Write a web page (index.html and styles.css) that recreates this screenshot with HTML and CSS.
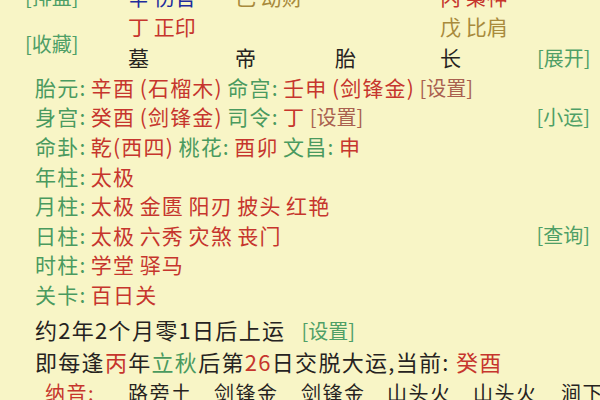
FILE: index.html
```html
<!DOCTYPE html>
<html lang="zh">
<head>
<meta charset="utf-8">
<link rel="stylesheet" href="styles.css">
</head>
<body>
<div class="page">
  <div class="pillars">
    <span class="btn c1 r1">[排盘]</span>
    <span class="c2 r1 blue">辛 伤官</span>
    <span class="c3 r1 olive">己 劫财</span>
    <span class="c5 r1 red">丙 枭神</span>
    <span class="c2 r2 red">丁 正印</span>
    <span class="c5 r2 olive">戊 比肩</span>
    <span class="btn c1 r23 save">[收藏]</span>
    <span class="c2 r3">墓</span>
    <span class="c3 r3">帝</span>
    <span class="c4 r3">胎</span>
    <span class="c5 r3">长</span>
    <span class="btn c6 r3 right">[展开]</span>
  </div>

  <div class="info">
    <div class="row"><span><span class="g">胎元: </span><span class="red">辛酉 (石榴木) </span><span class="g">命宫: </span><span class="red">壬申 (剑锋金) </span><span class="set">[设置]</span></span></div>
    <div class="row"><span><span class="g">身宫: </span><span class="red">癸酉 (剑锋金) </span><span class="g">司令: </span><span class="red">丁 </span><span class="set">[设置]</span></span><span class="btn">[小运]</span></div>
    <div class="row"><span><span class="g">命卦: </span><span class="red">乾(西四) </span><span class="g">桃花: </span><span class="red">酉卯 </span><span class="g">文昌: </span><span class="red">申</span></span></div>
    <div class="row"><span><span class="g">年柱: </span><span class="red">太极</span></span></div>
    <div class="row"><span><span class="g">月柱: </span><span class="red">太极 金匮 阳刃 披头 红艳</span></span></div>
    <div class="row"><span><span class="g">日柱: </span><span class="red">太极 六秀 灾煞 丧门</span></span><span class="btn">[查询]</span></div>
    <div class="row"><span><span class="g">时柱: </span><span class="red">学堂 驿马</span></span></div>
    <div class="row"><span><span class="g">关卡: </span><span class="red">百日关</span></span></div>
    <div class="row big luck"><span>约2年2个月零1日后上运 <span class="gset">[设置]</span></span></div>
    <div class="row big"><span>即每逢<span class="red">丙</span>年<span class="g">立秋</span>后第<span class="red">26</span>日交脱大运,当前: <span class="red">癸酉</span></span></div>
  </div>

  <div class="nayin">
    <span class="red nlabel">纳音:</span>
    <span>路旁土</span>
    <span>剑锋金</span>
    <span>剑锋金</span>
    <span>山头火</span>
    <span>山头火</span>
    <span>涧下水</span>
  </div>
</div>
</body>
</html>
```

FILE: styles.css
```css
html, body {
  margin: 0;
  padding: 0;
  background: #f8f5c6;
  overflow: hidden;
}
body {
  width: 600px;
  height: 400px;
  font-family: "Noto Sans CJK SC", "Noto Sans", sans-serif;
  color: #26231f;
  font-size: 20px;
}
.page {
  margin-top: -18px;
}
.pillars {
  display: grid;
  grid-template-columns: 128px 107px 100px 105px 97px 1fr;
  grid-template-rows: 29px 31px 30px;
  align-items: center;
  padding-right: 10px;
  line-height: 29px;
  font-size: 21px;
  white-space: nowrap;
}
.c1 { grid-column: 1; padding-left: 25px; }
.c2 { grid-column: 2; }
.c3 { grid-column: 3; }
.c4 { grid-column: 4; }
.c5 { grid-column: 5; }
.c6 { grid-column: 6; }
.r1 { grid-row: 1; }
.r2 { grid-row: 2; }
.r3 { grid-row: 3; }
.r23 { grid-row: 2 / 4; padding-top: 4px; }
.right { justify-self: end; }
.btn {
  color: #4f9f66;
  font-size: 20px;
  letter-spacing: 0;
  word-spacing: 0;
  white-space: nowrap;
}
.blue { color: #1e2c9c; }
.olive { color: #a88a3c; }
.red { color: #c6352d; }
.g { color: #4a9a5f; }
.set { color: #a9604f; font-size: 20px; letter-spacing: 0; }
.gset { color: #4f9f66; margin-left: 10px; font-size: 20px; letter-spacing: 0; word-spacing: 0; }
.info {
  padding: 0 10px 0 35px;
  font-size: 21px;
  letter-spacing: 1.2px;
  word-spacing: -1.5px;
}
.row {
  display: flex;
  justify-content: space-between;
  align-items: center;
  height: 29.6px;
  white-space: nowrap;
}
.big {
  font-size: 22px;
  letter-spacing: 1.3px;
  word-spacing: 0;
}
.luck {
  margin-top: 4px;
  height: 33px;
}
.nayin {
  display: grid;
  grid-template-columns: 83px 86px 87px 86px 86px 88px 1fr;
  padding-left: 45px;
  height: 30px;
  align-items: center;
  font-size: 20px;
  letter-spacing: 1.5px;
  white-space: nowrap;
  margin-top: 2px;
}
```
